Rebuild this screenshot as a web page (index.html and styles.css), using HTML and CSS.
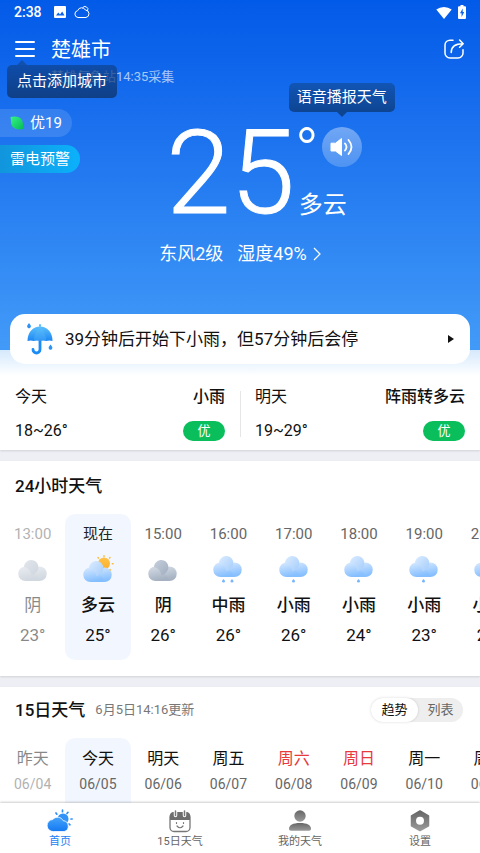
FILE: index.html
```html
<!DOCTYPE html>
<html lang="zh-CN">
<head>
<meta charset="utf-8">
<meta name="viewport" content="width=device-width, initial-scale=1">
<title>楚雄市天气</title>
<link rel="stylesheet" href="styles.css">
</head>
<body>
<svg class="defs" aria-hidden="true">
  <defs>
    <linearGradient id="g-blue" x1="0" y1="0" x2="0.3" y2="1"><stop offset="0" stop-color="#d9eaff"/><stop offset="1" stop-color="#86bfff"/></linearGradient>
    <linearGradient id="g-blue-puff" x1="0" y1="0" x2="1" y2="1"><stop offset="0" stop-color="#dcecff"/><stop offset="1" stop-color="#a3ccfb"/></linearGradient>
    <linearGradient id="g-grey" x1="0" y1="0" x2="0.3" y2="1"><stop offset="0" stop-color="#d6dde7"/><stop offset="1" stop-color="#a6b2c2"/></linearGradient>
    <linearGradient id="g-grey-puff" x1="0" y1="0" x2="1" y2="1"><stop offset="0" stop-color="#c6cfdc"/><stop offset="1" stop-color="#a0adbf"/></linearGradient>
    <linearGradient id="g-sun" x1="0" y1="0" x2="0" y2="1"><stop offset="0" stop-color="#ffc24a"/><stop offset="1" stop-color="#fbb02c"/></linearGradient>
    <linearGradient id="g-umbrella" x1="0" y1="0" x2="0" y2="1"><stop offset="0" stop-color="#5cc0fb"/><stop offset="1" stop-color="#1b86f3"/></linearGradient>
    <linearGradient id="g-leaf" x1="0" y1="0" x2="1" y2="1"><stop offset="0" stop-color="#35f585"/><stop offset="1" stop-color="#06b957"/></linearGradient>
    <linearGradient id="g-home" x1="0" y1="0" x2="0" y2="1"><stop offset="0" stop-color="#44a4fb"/><stop offset="1" stop-color="#1478f2"/></linearGradient>
    <linearGradient id="g-nav" x1="0" y1="0" x2="0" y2="1"><stop offset="0" stop-color="#666"/><stop offset="1" stop-color="#9a9a9a"/></linearGradient>
    <g id="shape-blue">
      <path d="M22.500 7.500a7.200 7.200 0 0 1 0 14.500H9l10-13z" fill="url(#g-blue)"/>
      <path d="M8.500 7.500a7.200 7.200 0 0 0 0 14.500h13.500q-1-6-6-8-1-6.500-7.500-6.500z" fill="url(#g-blue)"/>
      <path d="M7 8a7.200 7.200 0 1 1 12.500 5q-2 3-5 3.500-1-7-7.500-8.500z" fill="url(#g-blue-puff)"/>
    </g>
    <g id="shape-grey">
      <path d="M22.500 7.500a7.200 7.200 0 0 1 0 14.500H9l10-13z" fill="url(#g-grey)"/>
      <path d="M8.500 7.500a7.200 7.200 0 0 0 0 14.500h13.500q-1-6-6-8-1-6.500-7.500-6.500z" fill="url(#g-grey)"/>
      <path d="M7 8a7.200 7.200 0 1 1 12.500 5q-2 3-5 3.500-1-7-7.500-8.500z" fill="url(#g-grey-puff)"/>
    </g>
    <symbol id="i-rain1" viewBox="0 0 32 30">
      <use href="#shape-blue"/>
      <path d="M15.500 24l1.600 2a1.600 1.600 0 1 1-3.200 0z" fill="#79b5fb"/>
    </symbol>
    <symbol id="i-rain2" viewBox="0 0 32 30">
      <use href="#shape-blue"/>
      <path d="M11.500 24l1.600 2a1.600 1.600 0 1 1-3.200 0zM20 24l1.600 2a1.600 1.600 0 1 1-3.200 0z" fill="#79b5fb"/>
    </symbol>
    <symbol id="i-overcast" viewBox="0 0 32 30"><use href="#shape-grey" y="4"/></symbol>
    <symbol id="i-cloudy" viewBox="0 0 32 30">
      <circle cx="22" cy="8.500" r="6" fill="url(#g-sun)"/>
      <path d="M22 .8v.8M16 2.500l.5.5M28 2.500l-.5.500M30.300 8.800h.8M28 14.500l.5.500" stroke="#fdbb3d" stroke-width="1.500" stroke-linecap="round"/>
      <use href="#shape-blue" y="5"/>
    </symbol>
  </defs>
</svg>

<div class="app">
  <main class="scroll">
    <section class="hero">
      <div class="statusbar">
        <span class="clock">2:38</span>
        <svg class="s-photo" viewBox="0 0 12 12"><rect width="12" height="12" rx="1" fill="#fff"/><path d="M2 9.500l2.300-3 1.700 2 2.200-3L10.500 9.500z" fill="#0b62eb"/></svg>
        <svg class="s-cloud" viewBox="0 0 16 14" fill="none" stroke="#fff" stroke-width="1"><path d="M4 12.500a3.500 3.500 0 0 1-.3-6.900 4.200 4.200 0 0 1 7.700-.6 3.800 3.800 0 0 1 .6 7.500z"/><path d="M8.500 3a2.800 2.800 0 1 1 5 2.700"/></svg>
        <span class="grow"></span>
        <svg class="s-wifi" viewBox="0 0 16 13"><path d="M8 13L.3 3.600a12.500 12.500 0 0 1 15.400 0z" fill="#fff"/></svg>
        <svg class="s-battery" viewBox="0 0 8 14"><path d="M2.500 0h3v1.300H7a1 1 0 0 1 1 1V13a1 1 0 0 1-1 1H1a1 1 0 0 1-1-1V2.300a1 1 0 0 1 1-1h1.500z" fill="#fff"/><path d="M4.700 3.500L2 8.200h1.600V12L6.200 7H4.700z" fill="#0b62eb"/></svg>
      </div>
      <header class="topbar">
        <div class="menu-wrap">
          <button class="icon-btn" aria-label="城市列表"><svg class="ico20" viewBox="0 0 20 20"><path d="M1 3h18M1 10h18M1 17h18" stroke="#fff" stroke-width="2" stroke-linecap="round"/></svg></button>
          <div class="tip tip-city">点击添加城市</div>
        </div>
        <div class="place">
          <h1>楚雄市</h1>
          <p>楚雄气象站14:35采集</p>
        </div>
        <button class="icon-btn" aria-label="分享"><svg class="ico20" viewBox="0 0 20 20" fill="none" stroke="#fff" stroke-width="1.500" stroke-linecap="round" stroke-linejoin="round"><path d="M9 1.200H6A5 5 0 0 0 1 6v8a5 5 0 0 0 5 5h8a5 5 0 0 0 5-5v-3.200"/><path d="M7.200 13.500C7.200 8 10.500 4.800 19 4.800M15.600 1l3.600 3.800-3.600 3.400"/></svg></button>
      </header>

      <div class="now">
        <div class="tags">
          <a href="#air" class="tag tag-air"><svg class="leaf" viewBox="0 0 14 14"><path d="M.5 1C5-.3 10 .5 12 4c1.200 2.500.8 5 1.700 9C9 14 4.500 13.500 2.300 10.500.5 8 1.200 4.500.5 1z" fill="url(#g-leaf)"/></svg>优19</a>
          <a href="#warning" class="tag tag-warn">雷电预警</a>
        </div>
        <div class="reading">
          <span class="temp">25</span>
          <div class="side">
            <div class="deg-row">
              <span class="deg">°</span>
              <div class="speak-wrap">
                <div class="tip tip-voice">语音播报天气</div>
                <button class="speak" aria-label="语音播报天气"><svg viewBox="0 0 24 20"><path d="M1 6.200h4.500L11.500 1.500v17L5.500 14H1z" fill="#fff" stroke="#fff" stroke-linejoin="round"/><path d="M15 6.500q3 3.500 0 7M18.500 3q6 7 0 14" fill="none" stroke="#fff" stroke-width="1.800" stroke-linecap="round"/></svg></button>
              </div>
            </div>
            <span class="cond">多云</span>
          </div>
        </div>
      </div>
      <a href="#detail" class="detail"><span>东风2级</span><span>湿度49%</span><svg viewBox="0 0 8 14"><path d="M1 1l6 6-6 6" fill="none" stroke="#fff" stroke-width="1.200"/></svg></a>
    </section>

    <section class="brief">
      <a href="#rain" class="rain-card">
        <svg class="umbrella" viewBox="0 0 28 32">
          <path d="M14 3v-1" stroke="#5cc0fb" stroke-width="2" stroke-linecap="round"/>
          <path d="M14 18v8.500a3.500 3.500 0 0 1-7 0" fill="none" stroke="#1b8bf5" stroke-width="2.800" stroke-linecap="round"/>
          <path d="M1.500 18C1.500 9 7 3.500 14 3.500S26.500 9 26.500 18q-3-1-6.300 0-3-1-6.200 0-3-1-6.200 0-3.200-1-6.300 0z" fill="url(#g-umbrella)"/>
          <path d="M14 3.500q-6.200 6-6.200 14.500 3.200-1 6.200 0 3.200-1 6.200 0Q20.200 9.500 14 3.500z" fill="#62bffb" opacity=".3"/>
          <path d="M3 0l1.600 2.300a1.900 1.900 0 1 1-3.200 0zM24.500 21.500l1.600 2.300a1.900 1.900 0 1 1-3.200 0z" fill="#2b93f6"/>
        </svg>
        <span class="grow">39分钟后开始下小雨，但57分钟后会停</span>
        <svg class="play" viewBox="0 0 6 8"><path d="M0 0l6 4-6 4z" fill="#111"/></svg>
      </a>
      <div class="days">
        <div class="day"><span>今天</span><strong>小雨</strong><span>18~26°</span><em>优</em></div>
        <div class="day"><span>明天</span><strong>阵雨转多云</strong><span>19~29°</span><em>优</em></div>
      </div>
    </section>

    <section class="panel">
      <h2>24小时天气</h2>
      <ol class="strip hours">
        <li class="past"><time>13:00</time><svg><use href="#i-overcast"/></svg><b>阴</b><span>23°</span></li>
        <li class="current"><time>现在</time><svg><use href="#i-cloudy"/></svg><b>多云</b><span>25°</span></li>
        <li><time>15:00</time><svg><use href="#i-overcast"/></svg><b>阴</b><span>26°</span></li>
        <li><time>16:00</time><svg><use href="#i-rain2"/></svg><b>中雨</b><span>26°</span></li>
        <li><time>17:00</time><svg><use href="#i-rain1"/></svg><b>小雨</b><span>26°</span></li>
        <li><time>18:00</time><svg><use href="#i-rain1"/></svg><b>小雨</b><span>24°</span></li>
        <li><time>19:00</time><svg><use href="#i-rain1"/></svg><b>小雨</b><span>23°</span></li>
        <li><time>20:00</time><svg><use href="#i-rain1"/></svg><b>小雨</b><span>23°</span></li>
      </ol>
    </section>

    <section class="panel">
      <div class="panel-head">
        <h2>15日天气</h2>
        <small>6月5日14:16更新</small>
        <span class="grow"></span>
        <div class="switch"><button class="on">趋势</button><button>列表</button></div>
      </div>
      <ol class="strip dates">
        <li class="past"><b>昨天</b><time>06/04</time></li>
        <li class="current"><b>今天</b><time>06/05</time></li>
        <li><b>明天</b><time>06/06</time></li>
        <li><b>周五</b><time>06/07</time></li>
        <li class="weekend"><b>周六</b><time>06/08</time></li>
        <li class="weekend"><b>周日</b><time>06/09</time></li>
        <li><b>周一</b><time>06/10</time></li>
        <li><b>周二</b><time>06/11</time></li>
      </ol>
    </section>
  </main>

  <nav class="tabs">
    <a href="#home" class="on"><svg viewBox="0 0 26 24"><circle cx="16" cy="10" r="5.500" fill="#2f93f8"/><path d="M9 4l.8 1.200M15.500 1.200v1.500M21 3.300l-1 1.300M24 10h1.200M22 15l1 .8" stroke="#2f93f8" stroke-width="1.700" stroke-linecap="round"/><path d="M6.500 22.500a6 6 0 0 1-.8-12 6.300 6.300 0 0 1 10.500 1.200 5.500 5.500 0 0 1 1 10.800z" fill="url(#g-home)" stroke="#fff" stroke-width=".8"/></svg>首页</a>
    <a href="#days15"><svg viewBox="0 0 26 24"><rect x="3" y="4" width="20" height="18.500" rx="4" fill="#fff" stroke="#777" stroke-width="1.300"/><path d="M3 11V7a4 4 0 0 1 4-4h12a4 4 0 0 1 4 4v4z" fill="#6e6e6e"/><path d="M8.500 2v4.500M17.500 2v4.500" stroke="#fff" stroke-width="3.500" stroke-linecap="round"/><path d="M8.500 2v4.500M17.500 2v4.500" stroke="#777" stroke-width="1.500" stroke-linecap="round"/><path d="M9.500 13.500v1M16.500 13.500v1M10 17q3 3.500 6 0" fill="none" stroke="#777" stroke-width="1.200" stroke-linecap="round"/></svg>15日天气</a>
    <a href="#mine"><svg viewBox="0 0 26 24"><circle cx="13" cy="7" r="5.700" fill="url(#g-nav)"/><path d="M2 20c0-4 4-6 11-6s11 2 11 6q0 1.800-2 1.800H4q-2 0-2-1.800z" fill="url(#g-nav)"/></svg>我的天气</a>
    <a href="#settings"><svg viewBox="0 0 26 24"><path d="M13 2l8.500 4.800v10L13 21.600l-8.500-4.800v-10z" fill="url(#g-nav)" stroke="url(#g-nav)" stroke-width="1.500" stroke-linejoin="round"/><circle cx="13" cy="11.800" r="4" fill="#fff"/></svg>设置</a>
  </nav>
</div>
</body>
</html>
```
FILE: styles.css
```css
* { box-sizing: border-box; }
body, h1, h2, p, ol { margin: 0; padding: 0; }
body {
  font-family: Roboto, "Noto Sans CJK SC", sans-serif;
  font-size: 16px;
  line-height: 24px;
  color: #111;
  background: #eeeff4;
}
a { color: inherit; text-decoration: none; }
button { border: 0; padding: 0; background: none; font: inherit; color: inherit; }
svg { display: block; flex: none; }
ol { list-style: none; }
.defs { position: absolute; width: 0; height: 0; }
.grow { flex: 1; }

.app { display: flex; flex-direction: column; height: 100vh; }
.scroll { flex: 1; min-height: 0; overflow: hidden; }

/* Current conditions */
.hero {
  color: #fff;
  background: linear-gradient(#025ae8, #1a70ee 35%, #429bf8);
  padding-bottom: 84px;
}
.statusbar { display: flex; align-items: center; height: 24px; padding: 0 14px; }
.clock { font-size: 14px; font-weight: 500; width: 40px; }
.s-photo { width: 12px; height: 12px; }
.s-cloud { width: 16px; height: 14px; margin-left: 8px; }
.s-wifi { width: 16px; height: 13px; }
.s-battery { width: 8px; height: 14px; margin-left: 6px; }

.topbar { display: flex; align-items: flex-start; padding: 8px 16px 0 15px; }
.icon-btn { display: flex; align-items: center; height: 34px; }
.ico20 { width: 20px; height: 20px; }
.menu-wrap { position: relative; margin-right: 16px; }
.place { flex: 1; }
.place h1 { font-size: 20px; font-weight: 400; line-height: 36px; }
.place p { font-size: 13px; line-height: 18px; color: rgba(255, 255, 255, .65); }

.tip {
  position: absolute;
  z-index: 1;
  padding: 0 8px;
  border-radius: 5px;
  font-size: 15px;
  line-height: 29px;
  white-space: nowrap;
  background: linear-gradient(#1155b5, #0e4592);
}
.tip::after {
  content: "";
  position: absolute;
  border: 5px solid transparent;
}
.tip-city { top: 33px; left: -8px; padding: 0 10px; line-height: 33px; background: linear-gradient(rgba(14, 66, 142, .7), rgba(14, 48, 100, .75)); }
.tip-city::after { left: 10px; bottom: 100%; border-bottom-color: #1150ae; }
.tip-voice { bottom: 55px; left: 50%; transform: translateX(-50%); }
.tip-voice::after { left: 50%; margin-left: -5px; top: 100%; border-top-color: #0e4592; }

.now { display: grid; grid-template-columns: 1fr auto 1fr; padding-top: 23px; }
.tags { display: flex; flex-direction: column; align-items: flex-start; gap: 8px; }
.tag { display: flex; align-items: center; height: 28px; padding: 0 10px; border-radius: 0 14px 14px 0; font-size: 15px; }
.tag-air { background: rgba(255, 255, 255, .13); }
.tag-warn { background: linear-gradient(90deg, #1195dc, #0cb1fb); }
.leaf { width: 14px; height: 14px; margin-right: 6px; }
.reading { display: flex; padding: 16px 0 0 48px; }
.temp { font-size: 116px; font-weight: 300; line-height: 96px; -webkit-text-stroke: 1px #fff; }
.side { display: flex; flex-direction: column; }
.deg-row { display: flex; }
.deg { width: 27px; font-size: 64px; font-weight: 300; line-height: 56px; height: 40px; }
.speak-wrap { position: relative; }
.speak {
  display: flex;
  align-items: center;
  justify-content: center;
  width: 40px;
  height: 40px;
  margin-top: 2px;
  border-radius: 50%;
  background: linear-gradient(rgba(255, 255, 255, .38), rgba(255, 255, 255, .2));
}
.speak svg { width: 24px; height: 20px; }
.cond { font-size: 24px; line-height: 32px; margin: 22px 0 0 4px; }
.detail { display: flex; align-items: center; justify-content: center; gap: 14px; margin-top: 21px; font-size: 18px; }
.detail svg { width: 8px; height: 14px; margin-left: -8px; }

/* Two-day summary */
.brief {
  display: flow-root;
  background: linear-gradient(#d5e9fd, #fff 26px);
  box-shadow: 0 1px 2px rgba(0, 0, 0, .12);
}
.rain-card {
  position: relative;
  display: flex;
  align-items: center;
  height: 50px;
  margin: -36px 10px 0;
  padding: 0 16px;
  border-radius: 15px;
  font-size: 17px;
  background: #fff;
}
.umbrella { width: 28px; height: 32px; margin-right: 11px; }
.play { width: 6px; height: 8px; }
.days { display: grid; grid-template-columns: 1fr 1fr; padding: 17px 0 3px; }
.day { display: grid; grid-template-columns: auto auto; justify-content: space-between; align-items: center; row-gap: 2px; padding: 0 15px; line-height: 32px; }
.day + .day { background: linear-gradient(#e6e6e6, #e6e6e6) left center / 1px 46px no-repeat; }
.day strong { font-weight: 500; text-align: right; }
.day em { justify-self: end; width: 42px; height: 20px; border-radius: 10px; background: #0abf5b; color: #fff; font-size: 13px; font-style: normal; line-height: 20px; text-align: center; }

/* Forecast panels */
.panel { margin-top: 11px; background: #fff; box-shadow: 0 1px 2px rgba(0, 0, 0, .12); padding-bottom: 16px; }
h2 { padding: 13px 15px 0; font-size: 17px; font-weight: 500; }
.strip { display: flex; overflow: hidden; }
.strip li { flex: 0 0 13.6%; display: flex; flex-direction: column; align-items: center; border-radius: 10px; }
.strip .current { background: #f2f7ff; }
.strip time { color: #666; }
.hours { margin-top: 16px; }
.hours li { height: 146px; padding-top: 8px; font-size: 17px; }
.hours time { font-size: 15px; }
.hours svg { width: 32px; height: 30px; margin-top: 9px; }
.hours b { font-weight: 500; margin-top: 8px; }
.hours span { margin-top: 6px; }
.hours .current time { color: #222; }
.strip .past > * { opacity: .5; }
.hours .past b { font-weight: 400; }

.panel-head { display: flex; align-items: center; padding: 11px 17px 0 15px; }
.panel-head h2 { padding: 0; }
.panel-head small { margin-left: 10px; font-size: 13px; color: #777; }
.switch { display: flex; border-radius: 12px; background: #eee; font-size: 13px; color: #666; }
.switch button { width: 45px; height: 24px; border-radius: 12px; }
.switch .on { width: 47px; background: #fff; color: #111; box-shadow: 0 0 3px rgba(0, 0, 0, .15); }
.dates { margin-top: 16px; }
.dates li { height: 120px; padding-top: 9px; }
.dates b { font-weight: 400; }
.dates time { font-size: 14px; margin-top: 1px; }
.dates .weekend b { color: #e8393c; }

/* Bottom tabs */
.tabs { position: relative; display: flex; height: 50px; background: #fff; box-shadow: 0 -1px 2px rgba(0, 0, 0, .2); }
.tabs a { flex: 1; display: flex; flex-direction: column; align-items: center; padding-top: 6px; font-size: 11px; line-height: 16px; color: #666; }
.tabs svg { width: 26px; height: 24px; margin-bottom: 1px; }
.tabs .on { color: #1a82f5; }
```
